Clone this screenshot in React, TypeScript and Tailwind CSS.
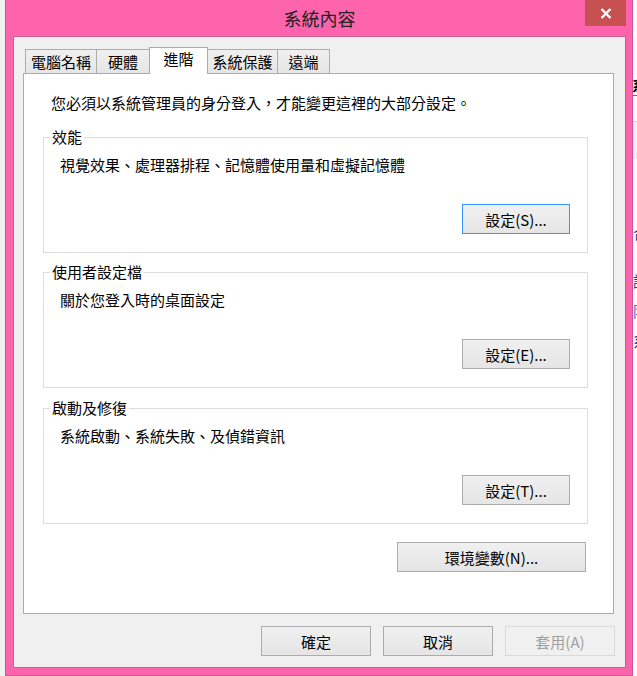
import React from "react";

type Variant = "default" | "focused" | "disabled";

const variants: Record<Variant, string> = {
  default: "border-[#acacac] bg-gradient-to-b from-[#f0f0f0] to-[#e5e5e5] text-black",
  focused: "border-[#3399ff] bg-gradient-to-b from-[#f0f0f0] to-[#e5e5e5] text-black",
  disabled: "border-[#d9d9d9] bg-[#f0f0f0] text-[#a0a0a0]",
};

function Button({
  children,
  className = "",
  variant = "default",
}: {
  children: React.ReactNode;
  className?: string;
  variant?: Variant;
}) {
  return (
    <button
      type="button"
      className={`flex h-[30px] shrink-0 items-center justify-center border text-[15px] leading-none ${variants[variant]} ${className}`}
    >
      {children}
    </button>
  );
}

const tabs = [
  { label: "電腦名稱", className: "w-[72px]" },
  { label: "硬體", className: "-ml-px w-[54px]" },
  { label: "進階", className: "-ml-px w-[59px]", active: true },
  { label: "系統保護", className: "-ml-px w-[71px]" },
  { label: "遠端", className: "-ml-px w-[53px]" },
];

const groups = [
  {
    title: "效能",
    desc: "視覺效果、處理器排程、記憶體使用量和虛擬記憶體",
    button: "設定(S)...",
    focused: true,
    gap: "mt-[14px]",
  },
  { title: "使用者設定檔", desc: "關於您登入時的桌面設定", button: "設定(E)...", gap: "mt-[9px]" },
  { title: "啟動及修復", desc: "系統啟動、系統失敗、及偵錯資訊", button: "設定(T)...", gap: "mt-[10px]" },
];

export default function App() {
  return (
    <div className="flex h-[676px] w-[637px] overflow-hidden bg-[#f0f0f0] font-['Noto_Sans_CJK_TC','Noto_Sans',sans-serif] text-[15px] text-black">
      {/* desktop behind, left */}
      <div className="w-[5px] shrink-0 bg-[#f0f0f0]" />

      {/* window frame */}
      <div className="flex w-[628px] shrink-0 flex-col border-x border-b border-[#c9559a] bg-[#fd64ab] px-[6px] pb-[7px] pl-[7px]">
        {/* title bar */}
        <div className="grid h-[36px] grid-cols-[1fr_auto_1fr]">
          <div />
          <div className="text-[18px] leading-[36px] text-[#222]">系統內容</div>
          <div className="flex justify-end">
            <div className="flex h-[26px] w-[41px] items-center justify-center bg-[#c75050]">
              <svg width="12" height="11" viewBox="0 0 12 11">
                <path d="M1.5 1 L10.5 10 M10.5 1 L1.5 10" stroke="#fff" strokeWidth="2.4" />
              </svg>
            </div>
          </div>
        </div>

        {/* client area */}
        <div className="flex flex-1 flex-col border border-[#cc5c98] bg-[#f0f0f0]">
          {/* tabs */}
          <div className="ml-[11px] mt-[10px] flex h-[26px] items-end">
            {tabs.map((t) =>
              t.active ? (
                <div
                  key={t.label}
                  className={`relative z-10 -mb-px flex h-[27px] justify-center border border-b-0 border-[#acacac] bg-white pt-[1px] leading-[20px] ${t.className}`}
                >
                  {t.label}
                </div>
              ) : (
                <div
                  key={t.label}
                  className={`flex h-[24px] items-center justify-center border border-b-0 border-[#acacac] bg-gradient-to-b from-[#f0f0f0] to-[#e5e5e5] leading-[20px] ${t.className}`}
                >
                  {t.label}
                </div>
              )
            )}
          </div>

          {/* tab page */}
          <div className="ml-[9px] flex h-[541px] w-[591px] flex-col border border-[#acacac] bg-white">
            <p className="ml-[27px] mt-[19px] leading-[20px]">
              您必須以系統管理員的身分登入，才能變更這裡的大部分設定。
            </p>

            {groups.map((g) => (
              <fieldset key={g.title} className={`ml-[19px] w-[545px] border border-[#dcdcdc] ${g.gap}`}>
                <legend className="ml-[6px] px-[2px] leading-[20px]">{g.title}</legend>
                <div className="flex flex-col">
                  <p className="ml-[16px] mt-[8px] leading-[20px]">{g.desc}</p>
                  <Button
                    variant={g.focused ? "focused" : "default"}
                    className="mb-[18px] mr-[17px] mt-[29px] w-[108px] self-end"
                  >
                    {g.button}
                  </Button>
                </div>
              </fieldset>
            ))}

            <Button className="mr-[27px] mt-[18px] w-[189px] self-end">環境變數(N)...</Button>
          </div>

          {/* dialog buttons */}
          <div className="mr-[10px] mt-[12px] flex justify-end gap-[12px]">
            <Button className="w-[110px]">確定</Button>
            <Button className="w-[110px]">取消</Button>
            <Button variant="disabled" className="w-[110px]">
              套用(A)
            </Button>
          </div>
        </div>
      </div>

      {/* desktop behind, right: edge of another window */}
      <div className="flex w-[4px] shrink-0 flex-col overflow-hidden bg-white leading-[20px]">
        <div className="mt-[75px] -ml-[1px] border-b border-[#e53935] font-bold">系</div>
        <div className="mt-[25px] h-[38px] border-t border-[#cfcfcf] bg-[#f0f0f0]" />
        <div className="mt-[64px] text-[#1a3c9c]">合</div>
        <div className="mt-[28px] text-[#1a3c9c]">調</div>
        <div className="mt-[10px] text-[#2b6fd6]">防</div>
        <div className="mt-[10px] text-[#1a3c9c]">系</div>
      </div>
    </div>
  );
}
